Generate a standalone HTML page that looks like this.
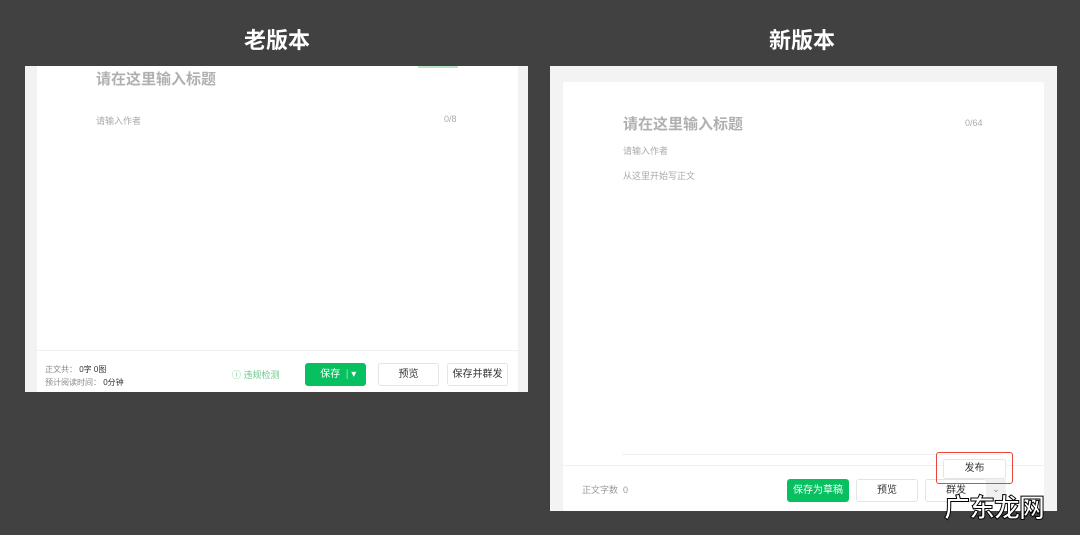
<!DOCTYPE html>
<html><head><meta charset="utf-8"><style>
*{margin:0;padding:0;box-sizing:border-box}
body{width:1080px;height:535px;background:#414141;position:relative;overflow:hidden;font-family:"Liberation Sans","Noto Sans CJK SC",sans-serif}
.a{position:absolute}
.h{color:#fff;font-size:22px;font-weight:bold}
.btn{position:absolute;border:1px solid #e4e4e4;border-radius:3px;background:#fff;font-size:10px;color:#333;text-align:center}
.g{background:#07c160;border-color:#07c160;color:#fff}
.t{font-size:15px;color:#b0b0b0;font-weight:bold}
</style></head><body>
<div class="a h" style="left:244px;top:23px">老版本</div>
<div class="a h" style="left:769px;top:23px">新版本</div>

<div class="a" style="left:25px;top:66px;width:503px;height:326px;background:#f2f2f2"></div>
<div class="a" style="left:37px;top:66px;width:481px;height:326px;background:#fff"></div>
<div class="a" style="left:418px;top:66px;width:40px;height:2px;background:#b8e6c8"></div>
<div class="a t" style="left:96px;top:68px">请在这里输入标题</div>
<div class="a" style="left:96px;top:114px;font-size:9px;color:#aaa">请输入作者</div>
<div class="a" style="left:444px;top:114px;font-size:9px;color:#aaa">0/8</div>
<div class="a" style="left:37px;top:350px;width:481px;height:1px;background:#f0f0f0"></div>
<div class="a" style="left:45px;top:364px;font-size:8px;color:#888">正文共： <span style="color:#333">0字 0图</span></div>
<div class="a" style="left:45px;top:377px;font-size:8px;color:#888">预计阅读时间： <span style="color:#333">0分钟</span></div>
<div class="a" style="left:232px;top:368px;font-size:9px;color:#6cc88b">ⓘ 违规检测</div>
<div class="btn g" style="left:305px;top:363px;width:61px;height:23px;line-height:21px">&nbsp;&nbsp;保存 &nbsp;<span style="opacity:.6">|</span> ▾</div>
<div class="btn" style="left:378px;top:363px;width:61px;height:23px;line-height:21px">预览</div>
<div class="btn" style="left:447px;top:363px;width:61px;height:23px;line-height:21px">保存并群发</div>

<div class="a" style="left:550px;top:66px;width:507px;height:445px;background:#f3f3f3"></div>
<div class="a" style="left:563px;top:82px;width:481px;height:429px;background:#fff;border-radius:2px"></div>
<div class="a" style="left:563px;top:465px;width:481px;height:1px;background:#f0f0f0"></div>
<div class="a t" style="left:623px;top:113px">请在这里输入标题</div>
<div class="a" style="left:965px;top:118px;font-size:9px;color:#aaa">0/64</div>
<div class="a" style="left:623px;top:144px;font-size:9px;color:#aaa">请输入作者</div>
<div class="a" style="left:623px;top:169px;font-size:9px;color:#aaa">从这里开始写正文</div>
<div class="a" style="left:622px;top:454px;width:381px;height:1px;background:#eee"></div>
<div class="a" style="left:582px;top:483px;font-size:9px;color:#999">正文字数&nbsp; 0</div>
<div class="btn g" style="left:787px;top:479px;width:62px;height:23px;line-height:21px">保存为草稿</div>
<div class="btn" style="left:856px;top:479px;width:62px;height:23px;line-height:21px">预览</div>
<div class="btn" style="left:925px;top:479px;width:62px;height:23px;line-height:21px">群发</div>
<div class="a" style="left:986px;top:479px;width:20px;height:23px;background:#f0f0f0;color:#888;font-size:9px;text-align:center;line-height:21px">⌄</div>
<div class="btn" style="left:943px;top:459px;width:63px;height:20px;line-height:18px">发布</div>
<div class="a" style="left:936px;top:452px;width:77px;height:32px;border:1.5px solid #e8453c;border-radius:3px"></div>
<div class="a" style="left:944px;top:488px;font-size:26px;color:#fff;font-weight:bold;letter-spacing:-1px;-webkit-text-stroke:1px #000;font-family:'Noto Sans CJK SC',sans-serif">广东龙网</div>
</body></html>
